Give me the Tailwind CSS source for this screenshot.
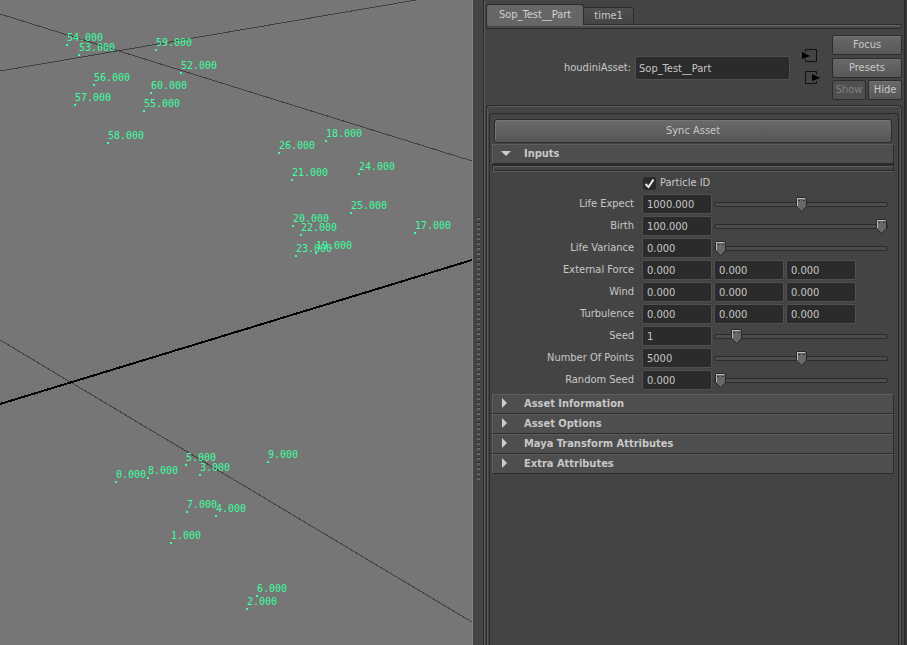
<!DOCTYPE html>
<html lang="en">
<head>
  <meta charset="UTF-8">
  <meta name="viewport" content="width=device-width, initial-scale=1.0">
  <title>Attribute Editor</title>
  <script src="https://cdn.jsdelivr.net/npm/@tailwindcss/browser@4"></script>
  <style>
    /* slider thumb */
    input[type="range"]::-webkit-slider-thumb {
      -webkit-appearance: none;
      width: 11px;
      height: 15px;
      background: url("data:image/svg+xml,%3Csvg xmlns='http://www.w3.org/2000/svg' width='11' height='15'%3E%3Cpath d='M1.5 .5h8l1 1v8l-5 5-5-5v-8z' fill='%23686868' stroke='%23262626'/%3E%3Cpath d='M1.5 9V1.5H9' fill='none' stroke='%23bdbdbd'/%3E%3Cpath d='M2 3h2v1H2zM7 3h2v1H7z' fill='%23333'/%3E%3C/svg%3E") no-repeat;
    }
  </style>
</head>
<body class="flex h-screen overflow-hidden bg-[#444] font-['DejaVu_Sans_Condensed','DejaVu_Sans',sans-serif] text-[11px] leading-4 text-[#c8c8c8] [font-stretch:condensed]">

  <!-- 3D viewport -->
  <main class="w-[52.15%] shrink-0 border-r border-[#828282] bg-[#767676]">
    <svg id="viewport" class="size-full font-['DejaVu_Sans_Mono',monospace] text-[10px]" aria-label="Particle viewport">
      <g stroke="#404040" shape-rendering="crispEdges">
        <path d="M0 14L472 161"/>
        <path d="M0 71L416 0"/>
        <path d="M0 340L472 622"/>
        <path d="M0 404L472 260" stroke="#000" stroke-width="2"/>
      </g>
      <g id="points" fill="#3cffa0"></g>
    </svg>
  </main>

  <!-- splitter -->
  <div class="flex w-[10px] shrink-0 items-center justify-center pt-[53px]">
    <div class="h-[264px] w-[3px] bg-[linear-gradient(#2f2f2f_1px,#666_1px,#666_3px,transparent_3px)] bg-size-[3px_5px]"></div>
  </div>

  <!-- attribute editor -->
  <aside class="flex min-w-0 flex-1 flex-col border-l border-[#2b2b2b] pr-px">
    <div class="flex min-h-0 flex-1 flex-col border-r-2 border-l border-r-[#2b2b2b] border-l-[#5a5a5a] pr-[2px] pl-px pt-1">

      <nav class="flex items-end">
        <button class="z-10 -mb-px h-[21px] rounded-t-[3px] border border-b-0 border-[#2b2b2b] bg-[#666] px-3 text-[#d0d0d0]">Sop_Test__Part</button>
        <button class="h-[17px] rounded-tr-[3px] border border-b-0 border-l-0 border-[#2b2b2b] bg-linear-to-b from-[#505050] to-[#444] px-[10px]">time1</button>
      </nav>
      <div class="h-[5px] shrink-0 rounded-sm border border-[#2b2b2b] bg-[#4a4a4a] shadow-[inset_0_1px_#666]"></div>

      <header class="flex pt-[6px]">
        <div class="flex h-[66px] flex-1 items-center pl-[78px]">
          <label for="node" class="mr-1">houdiniAsset:</label>
          <input id="node" value="Sop_Test__Part" class="h-6 w-[155px] rounded-xs border border-[#505050] bg-[#2b2b2b] px-[3px] outline-none">
        </div>
        <div class="mr-3 flex flex-col gap-2 pt-[14px]">
          <button aria-label="Go to input">
            <svg class="h-[14px] w-[18px]" viewBox="0 0 18 14"><path d="M3.5 3V.5h11v12h-11V10" fill="none" stroke="#111"/><path d="M0 3l8 4-8 3z"/></svg>
          </button>
          <button aria-label="Go to output">
            <svg class="h-[14px] w-[18px]" viewBox="0 0 18 14"><path d="M14.5 3V.5h-11v12h11V10" fill="none" stroke="#111"/><path d="M10 3l8 4-8 3z"/></svg>
          </button>
        </div>
        <div class="grid w-[70px] grid-cols-2 gap-[2px]">
          <button class="col-span-2 h-5 rounded-xs border border-[#2b2b2b] bg-linear-to-b from-[#686868] to-[#585858] shadow-[inset_0_1px_#707070]">Focus</button>
          <button class="col-span-2 h-5 rounded-xs border border-[#2b2b2b] bg-linear-to-b from-[#686868] to-[#585858] shadow-[inset_0_1px_#707070]">Presets</button>
          <button disabled class="h-5 rounded-xs border border-[#2b2b2b] bg-[#505050] text-[#808080]">Show</button>
          <button class="h-5 rounded-xs border border-[#2b2b2b] bg-linear-to-b from-[#686868] to-[#585858] shadow-[inset_0_1px_#707070]">Hide</button>
        </div>
      </header>

      <div class="mt-1 flex flex-1 rounded-t-sm border border-b-0 border-[#2b2b2b] px-[2px] pt-[7px] shadow-[inset_1px_1px_#5a5a5a,inset_-1px_0_#5a5a5a]">
        <div class="min-w-0 flex-1 rounded-t-sm border border-b-0 border-[#2b2b2b] pt-[5px] pr-1 pl-[2px]">
          <button class="mb-px ml-[2px] block h-6 w-[calc(100%-4px)] rounded-[3px] border border-[#2b2b2b] bg-linear-to-b from-[#6a6a6a] to-[#565656] shadow-[inset_1px_1px_#747474]">Sync Asset</button>

          <section>
            <h2 class="border border-t-[#5e5e5e] border-r-[#2b2b2b] border-b-[#2b2b2b] border-l-[#5e5e5e] bg-[#4e4e4e] text-[11px] font-bold">
              <button class="flex h-[18px] w-full items-center pl-2">
                <svg class="mr-[13px] mb-[3px] h-[10px] w-[10px] fill-[#ccc]" viewBox="0 0 10 10"><path d="M0 3h10L5 8z"/></svg>Inputs
              </button>
            </h2>
            <div class="h-2 border border-t-2 border-[#2b2b2b] border-b-[#5e5e5e] shadow-[inset_1px_1px_#5e5e5e,inset_0_-1px_#2b2b2b]"></div>

            <div class="flex flex-col gap-[2px] pt-[2px] pr-[6px] pb-1">
              <label class="flex h-[18px] items-center gap-1 pl-[151px]">
                <input type="checkbox" checked class="peer sr-only">
                <svg class="size-[13px] rounded-xs bg-[#2b2b2b]" viewBox="0 0 13 13"><path d="M2.5 7l3 3 5-7.5" fill="none" stroke="#eee" stroke-width="2"/></svg>
                Particle ID
              </label>
              <div class="flex h-5 items-center">
                <label for="life" class="mr-2 w-[142px] text-right">Life Expect</label>
                <input id="life" value="1000.000" class="h-5 w-[70px] rounded-xs border border-[#505050] bg-[#2b2b2b] px-1 outline-none">
                <input type="range" value="50" aria-label="Life Expect" class="ml-[2px] h-[5px] min-w-0 flex-1 appearance-none rounded-xs border border-[#2b2b2b] bg-[#4c4c4c]">
              </div>
              <div class="flex h-5 items-center">
                <label for="birth" class="mr-2 w-[142px] text-right">Birth</label>
                <input id="birth" value="100.000" class="h-5 w-[70px] rounded-xs border border-[#505050] bg-[#2b2b2b] px-1 outline-none">
                <input type="range" value="100" aria-label="Birth" class="ml-[2px] h-[5px] min-w-0 flex-1 appearance-none rounded-xs border border-[#2b2b2b] bg-[#4c4c4c]">
              </div>
              <div class="flex h-5 items-center">
                <label for="variance" class="mr-2 w-[142px] text-right">Life Variance</label>
                <input id="variance" value="0.000" class="h-5 w-[70px] rounded-xs border border-[#505050] bg-[#2b2b2b] px-1 outline-none">
                <input type="range" value="0" aria-label="Life Variance" class="ml-[2px] h-[5px] min-w-0 flex-1 appearance-none rounded-xs border border-[#2b2b2b] bg-[#4c4c4c]">
              </div>
              <div class="flex h-5 items-center gap-[2px]">
                <label for="force" class="mr-[6px] w-[142px] text-right">External Force</label>
                <input id="force" value="0.000" class="h-5 w-[70px] rounded-xs border border-[#505050] bg-[#2b2b2b] px-1 outline-none">
                <input value="0.000" aria-label="External Force Y" class="h-5 w-[70px] rounded-xs border border-[#505050] bg-[#2b2b2b] px-1 outline-none">
                <input value="0.000" aria-label="External Force Z" class="h-5 w-[70px] rounded-xs border border-[#505050] bg-[#2b2b2b] px-1 outline-none">
              </div>
              <div class="flex h-5 items-center gap-[2px]">
                <label for="wind" class="mr-[6px] w-[142px] text-right">Wind</label>
                <input id="wind" value="0.000" class="h-5 w-[70px] rounded-xs border border-[#505050] bg-[#2b2b2b] px-1 outline-none">
                <input value="0.000" aria-label="Wind Y" class="h-5 w-[70px] rounded-xs border border-[#505050] bg-[#2b2b2b] px-1 outline-none">
                <input value="0.000" aria-label="Wind Z" class="h-5 w-[70px] rounded-xs border border-[#505050] bg-[#2b2b2b] px-1 outline-none">
              </div>
              <div class="flex h-5 items-center gap-[2px]">
                <label for="turbulence" class="mr-[6px] w-[142px] text-right">Turbulence</label>
                <input id="turbulence" value="0.000" class="h-5 w-[70px] rounded-xs border border-[#505050] bg-[#2b2b2b] px-1 outline-none">
                <input value="0.000" aria-label="Turbulence Y" class="h-5 w-[70px] rounded-xs border border-[#505050] bg-[#2b2b2b] px-1 outline-none">
                <input value="0.000" aria-label="Turbulence Z" class="h-5 w-[70px] rounded-xs border border-[#505050] bg-[#2b2b2b] px-1 outline-none">
              </div>
              <div class="flex h-5 items-center">
                <label for="seed" class="mr-2 w-[142px] text-right">Seed</label>
                <input id="seed" value="1" class="h-5 w-[70px] rounded-xs border border-[#505050] bg-[#2b2b2b] px-1 outline-none">
                <input type="range" value="10" aria-label="Seed" class="ml-[2px] h-[5px] min-w-0 flex-1 appearance-none rounded-xs border border-[#2b2b2b] bg-[#4c4c4c]">
              </div>
              <div class="flex h-5 items-center">
                <label for="count" class="mr-2 w-[142px] text-right">Number Of Points</label>
                <input id="count" value="5000" class="h-5 w-[70px] rounded-xs border border-[#505050] bg-[#2b2b2b] px-1 outline-none">
                <input type="range" value="50" aria-label="Number Of Points" class="ml-[2px] h-[5px] min-w-0 flex-1 appearance-none rounded-xs border border-[#2b2b2b] bg-[#4c4c4c]">
              </div>
              <div class="flex h-5 items-center">
                <label for="random" class="mr-2 w-[142px] text-right">Random Seed</label>
                <input id="random" value="0.000" class="h-5 w-[70px] rounded-xs border border-[#505050] bg-[#2b2b2b] px-1 outline-none">
                <input type="range" value="0" aria-label="Random Seed" class="ml-[2px] h-[5px] min-w-0 flex-1 appearance-none rounded-xs border border-[#2b2b2b] bg-[#4c4c4c]">
              </div>
            </div>
          </section>

          <h2 class="border border-t-[#5e5e5e] border-r-[#2b2b2b] border-b-[#2b2b2b] border-l-[#5e5e5e] bg-[#4e4e4e] text-[11px] font-bold">
            <button class="flex h-[18px] w-full items-center pl-2">
              <svg class="mr-[13px] mb-[3px] h-[10px] w-[10px] fill-[#ccc]" viewBox="0 0 10 10"><path d="M1 0l5 5-5 5z"/></svg>Asset Information
            </button>
          </h2>
          <h2 class="border border-t-[#5e5e5e] border-r-[#2b2b2b] border-b-[#2b2b2b] border-l-[#5e5e5e] bg-[#4e4e4e] text-[11px] font-bold">
            <button class="flex h-[18px] w-full items-center pl-2">
              <svg class="mr-[13px] mb-[3px] h-[10px] w-[10px] fill-[#ccc]" viewBox="0 0 10 10"><path d="M1 0l5 5-5 5z"/></svg>Asset Options
            </button>
          </h2>
          <h2 class="border border-t-[#5e5e5e] border-r-[#2b2b2b] border-b-[#2b2b2b] border-l-[#5e5e5e] bg-[#4e4e4e] text-[11px] font-bold">
            <button class="flex h-[18px] w-full items-center pl-2">
              <svg class="mr-[13px] mb-[3px] h-[10px] w-[10px] fill-[#ccc]" viewBox="0 0 10 10"><path d="M1 0l5 5-5 5z"/></svg>Maya Transform Attributes
            </button>
          </h2>
          <h2 class="border border-t-[#5e5e5e] border-r-[#2b2b2b] border-b-[#2b2b2b] border-l-[#5e5e5e] bg-[#4e4e4e] text-[11px] font-bold">
            <button class="flex h-[18px] w-full items-center pl-2">
              <svg class="mr-[13px] mb-[3px] h-[10px] w-[10px] fill-[#ccc]" viewBox="0 0 10 10"><path d="M1 0l5 5-5 5z"/></svg>Extra Attributes
            </button>
          </h2>
        </div>
      </div>
    </div>
  </aside>

  <script>
    // particle id, x, y
    const particles = [
      [54, 66, 44], [53, 78, 54], [59, 155, 49], [52, 180, 72], [56, 93, 84],
      [57, 74, 104], [60, 150, 92], [55, 143, 110], [58, 107, 142],
      [26, 278, 152], [18, 325, 140], [21, 291, 179], [24, 358, 173],
      [25, 350, 212], [20, 292, 225], [22, 300, 234], [17, 414, 232],
      [19, 315, 252], [23, 295, 255],
      [0, 115, 481], [8, 147, 477], [5, 185, 464], [3, 199, 474], [9, 267, 461],
      [7, 186, 511], [4, 215, 515], [1, 170, 542], [6, 256, 595], [2, 246, 608]
    ];

    document.getElementById('points').innerHTML = particles.map(([id, x, y]) =>
      `<rect x="${x}" y="${y}" width="2" height="2"/><text x="${x + 1}" y="${y - 3}">${id.toFixed(3)}</text>`
    ).join('');
  </script>
</body>
</html>
